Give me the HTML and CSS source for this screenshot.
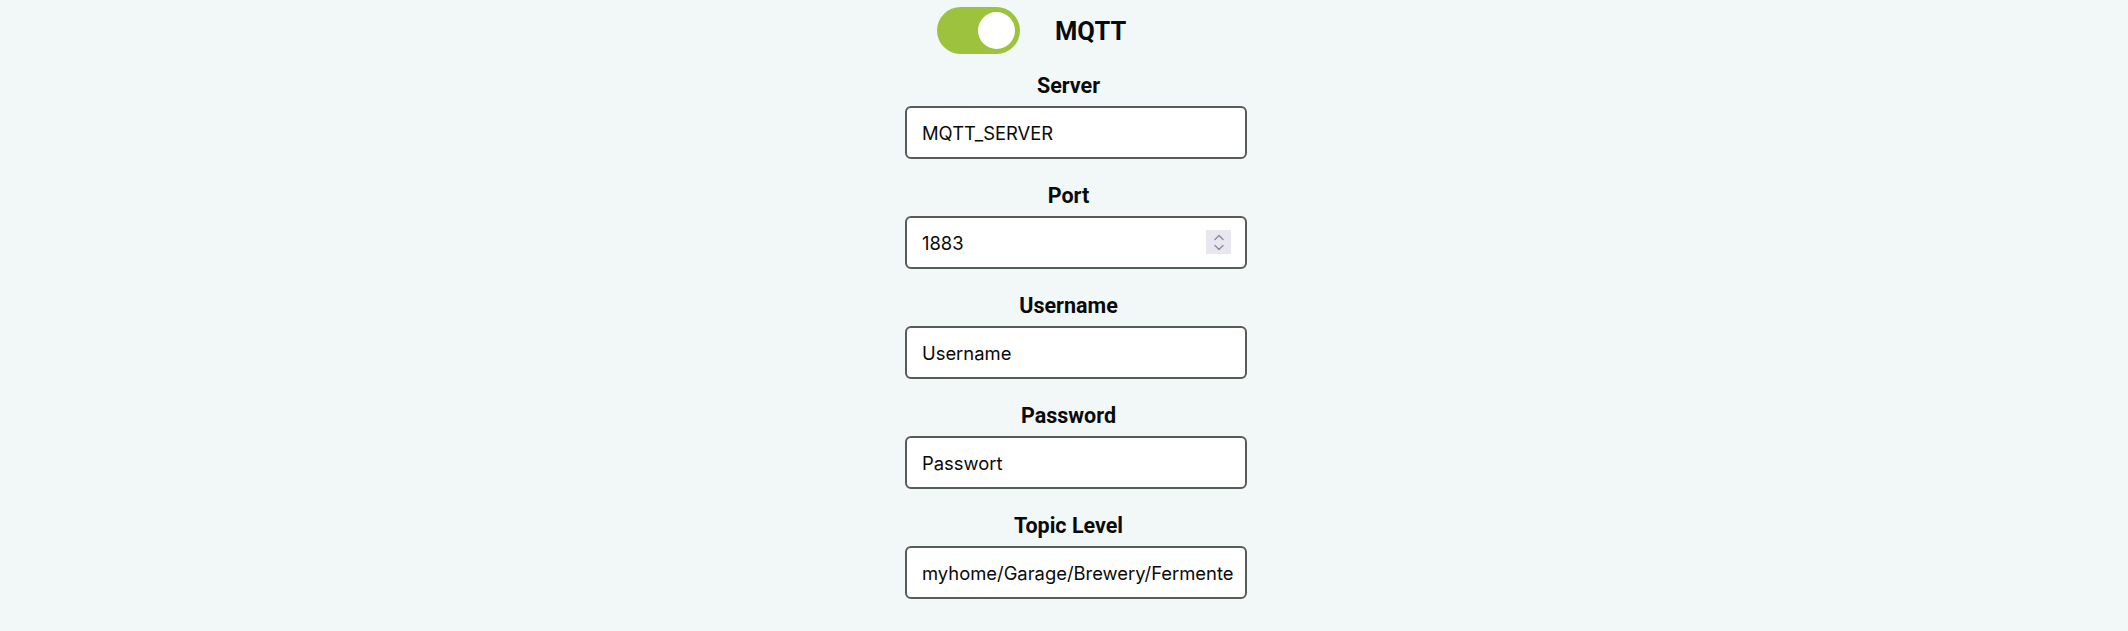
FILE: index.html
```html
<!DOCTYPE html>
<html lang="en">
<head>
<meta charset="utf-8">
<title>MQTT</title>
<link rel="stylesheet" href="styles.css">
</head>
<body>
<div class="page">
  <form class="panel">
    <div class="toggle-row">
      <span class="toggle"><span class="knob"></span></span>
      <span class="title">MQTT</span>
    </div>
    <div class="group">
      <label class="label">Server</label>
      <input class="field" type="text" value="MQTT_SERVER">
    </div>
    <div class="group">
      <label class="label">Port</label>
      <div class="field-wrap">
        <input class="field" type="text" value="1883">
        <span class="spinner">
          <svg width="10" height="17" viewBox="0 0 10 17"><path d="M1 5.5 L5 1.5 L9 5.5" fill="none" stroke="#8e8a9c" stroke-width="1.4" stroke-linecap="round" stroke-linejoin="round"/><path d="M1 11.5 L5 15.5 L9 11.5" fill="none" stroke="#8e8a9c" stroke-width="1.4" stroke-linecap="round" stroke-linejoin="round"/></svg>
        </span>
      </div>
    </div>
    <div class="group">
      <label class="label">Username</label>
      <input class="field" type="text" value="Username">
    </div>
    <div class="group">
      <label class="label">Password</label>
      <input class="field" type="text" value="Passwort">
    </div>
    <div class="group">
      <label class="label">Topic Level</label>
      <input class="field" type="text" value="myhome/Garage/Brewery/Fermenter">
    </div>
  </form>
</div>
</body>
</html>
```
FILE: styles.css
```css
html, body {
  margin: 0;
  padding: 0;
  background: #f1f8f7;
}
body {
  font-family: Roboto, "Liberation Sans", sans-serif;
  color: #111;
  height: 631px;
  overflow: hidden;
}
.page {
  display: flex;
  justify-content: center;
  padding-left: 9px;
}
.panel {
  width: 327px;
  display: flex;
  flex-direction: column;
  margin: 0;
}
.toggle-row {
  display: flex;
  align-items: center;
  gap: 35px;
  margin-top: 7px;
  margin-left: 32px;
  height: 47px;
}
.toggle {
  width: 83px;
  height: 47px;
  border-radius: 24px;
  background: #9cc23e;
  display: flex;
  align-items: center;
  justify-content: flex-end;
  padding-right: 5px;
  box-sizing: border-box;
}
.knob {
  width: 37px;
  height: 37px;
  border-radius: 50%;
  background: #fff;
}
.title {
  font-weight: 700;
  font-size: 25.5px;
  color: #0a0a0a;
}
.group {
  display: flex;
  flex-direction: column;
  align-items: center;
  margin-top: 19px;
}
.group + .group {
  margin-top: 24px;
}
.label {
  font-weight: 700;
  font-size: 21.5px;
  line-height: 25px;
  margin-bottom: 8px;
  color: #0a0a0a;
}
.field-wrap {
  position: relative;
  align-self: flex-start;
}
.field {
  align-self: flex-start;
  width: 342px;
  height: 53px;
  box-sizing: border-box;
  border: 2px solid #575c58;
  border-radius: 6px;
  background: #fff;
  padding: 0 12px 0 15px;
  font-family: Inter, Roboto, sans-serif;
  font-size: 18.4px;
  color: #0a0a0a;
  outline: none;
  margin: 0;
  display: block;
}
.spinner {
  position: absolute;
  right: 16px;
  top: 14px;
  width: 25px;
  height: 24px;
  background: #e8e6ee;
  display: flex;
  align-items: center;
  justify-content: center;
}
```
